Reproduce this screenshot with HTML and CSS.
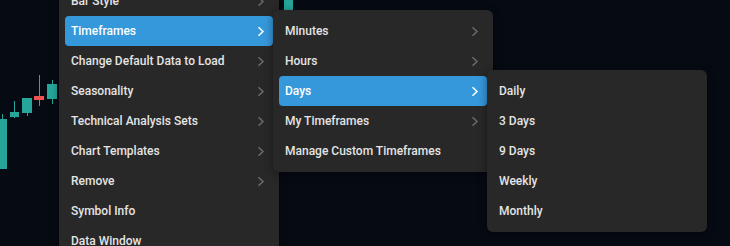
FILE: index.html
```html
<!DOCTYPE html>
<html>
<head>
	<title>Chart context menu</title>
	<link rel="stylesheet" href="styles.css">
</head>
<body>
	<div class="chart">
		<svg class="candles" width="730" height="246" viewBox="0 0 730 246">
			<!-- wicks -->
			<rect x="2" y="114" width="1" height="8" fill="#26a69a"/>
			<rect x="14" y="101" width="1" height="17" fill="#26a69a"/>
			<rect x="27" y="110" width="1" height="6" fill="#26a69a"/>
			<rect x="39" y="75" width="1" height="31" fill="#ef5350"/>
			<rect x="52" y="80" width="1" height="24" fill="#26a69a"/>
			<!-- bodies -->
			<rect x="0" y="119" width="7" height="50" fill="#26a69a"/>
			<rect x="10" y="112" width="9" height="5" fill="#26a69a"/>
			<rect x="22" y="98" width="10" height="15" fill="#26a69a"/>
			<rect x="34" y="96" width="10" height="4" fill="#ef5350"/>
			<rect x="47" y="84" width="10" height="15" fill="#26a69a"/>
			<rect x="284" y="0" width="9" height="10" fill="#26a69a"/>
		</svg>

		<ul class="menu menu-main">
			<li class="item has-sub">Bar Style</li>
			<li class="item has-sub active">Timeframes</li>
			<li class="item has-sub">Change Default Data to Load</li>
			<li class="item has-sub">Seasonality</li>
			<li class="item has-sub">Technical Analysis Sets</li>
			<li class="item has-sub">Chart Templates</li>
			<li class="item has-sub">Remove</li>
			<li class="item">Symbol Info</li>
			<li class="item">Data Window</li>
		</ul>

		<ul class="menu menu-timeframes">
			<li class="item has-sub">Minutes</li>
			<li class="item has-sub">Hours</li>
			<li class="item has-sub active">Days</li>
			<li class="item has-sub">My Timeframes</li>
			<li class="item">Manage Custom Timeframes</li>
		</ul>

		<ul class="menu menu-days">
			<li class="item">Daily</li>
			<li class="item">3 Days</li>
			<li class="item">9 Days</li>
			<li class="item">Weekly</li>
			<li class="item">Monthly</li>
		</ul>
	</div>

	<script>
		// Add a chevron to every item that opens a submenu
		var chevron = '<svg class="chevron" width="8" height="11" viewBox="0 0 8 11">' +
			'<path d="M1.5 1.2 L6 5.5 L1.5 9.8" fill="none" stroke="currentColor" stroke-width="1.5"/></svg>';
		document.querySelectorAll('.has-sub').forEach(function(li) {
			li.innerHTML = '<span>' + li.textContent + '</span>' + chevron;
		});
	</script>
</body>
</html>
```

FILE: styles.css
```css
body {
	margin: 0;
	padding: 0;
	background-color: #060a13;
	font-family: Roboto, "Liberation Sans", sans-serif;
	overflow: hidden;
}

.chart {
	position: relative;
	width: 730px;
	height: 246px;
	overflow: hidden;
}

.candles {
	display: block;
}

.menu {
	position: absolute;
	width: 208px;
	margin: 0;
	padding: 6px;
	list-style: none;
	background-color: #282828;
	border-radius: 6px;
	box-shadow: 0 2px 8px rgba(0, 0, 0, 0.45);
}

.menu-main {
	left: 59px;
	top: -20px;
	border-radius: 0;
}

.menu-timeframes {
	left: 273px;
	top: 10px;
}

.menu-days {
	left: 487px;
	top: 70px;
}

.item {
	display: flex;
	align-items: center;
	justify-content: space-between;
	height: 30px;
	padding: 0 8px 0 6px;
	font-size: 12px;
	font-weight: 500;
	color: #e4e4e4;
	border-radius: 4px;
	white-space: nowrap;
}

.item .chevron {
	color: #6b6b6b;
}

.item.active {
	background-color: #3598db;
	color: #ffffff;
}

.item.active .chevron {
	color: #ffffff;
}
```
